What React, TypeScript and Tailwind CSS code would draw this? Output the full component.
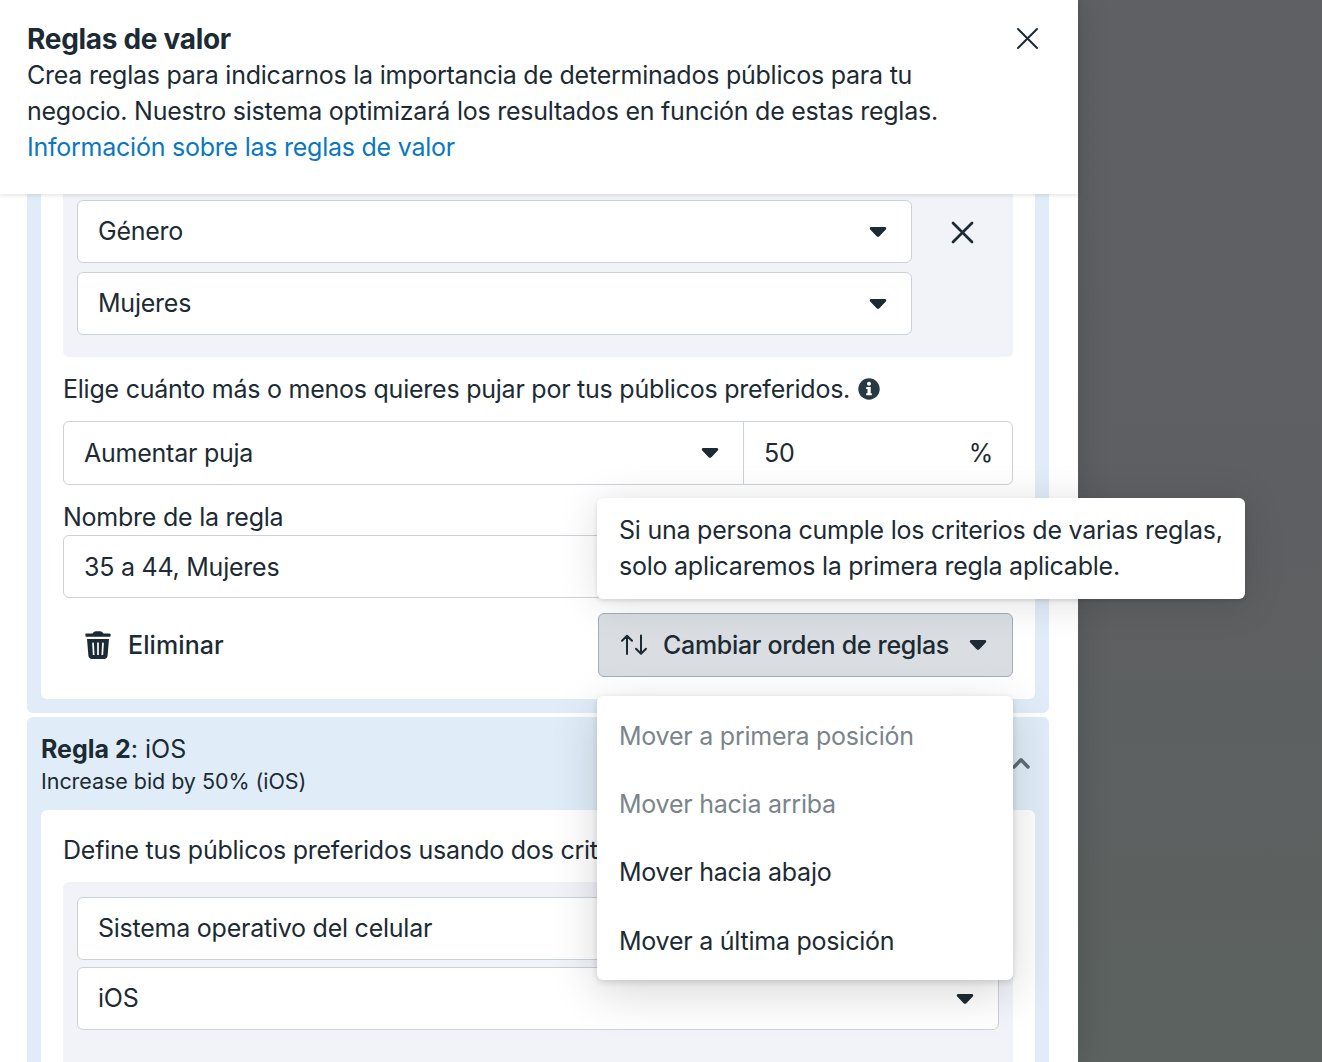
import type { ReactNode } from 'react'

function Caret() {
  return (
    <svg width="18" height="12" viewBox="0 0 18 12" className="shrink-0" aria-hidden>
      <path
        d="M2.2 1h13.6c1.4 0 2 1.5 1 2.5l-6.2 6.4a2.2 2.2 0 0 1-3.2 0L1.200 3.500C.200 2.500.800 1 2.200 1z"
        fill="#1c2b33"
      />
    </svg>
  )
}

function Cross({ weight }: { weight: number }) {
  return (
    <svg width="25" height="25" viewBox="0 0 25 25" fill="none" aria-hidden>
      <path d="M3 3l19 19M22 3L3 22" stroke="#1c2b33" strokeWidth={weight} strokeLinecap="round" />
    </svg>
  )
}

function InfoIcon() {
  return (
    <svg width="22" height="22" viewBox="0 0 22 22" aria-hidden>
      <circle cx="11" cy="11" r="10.700" fill="#283943" />
      <circle cx="11" cy="5.700" r="2" fill="#fff" />
      <path d="M8.200 9h4.500v6.200h1.100v2H8.200v-2h1.300V11H8.200z" fill="#fff" />
    </svg>
  )
}

function TrashIcon() {
  return (
    <svg width="26" height="30" viewBox="0 0 26 30" fill="none" aria-hidden>
      <path
        d="M7.500 3.600C8.700 2 9.500 1.200 11 1.200h4c1.500 0 2.300.8 3.500 2.400h6.100a1 1 0 0 1 1 1v1.200a.9.9 0 0 1-.9.9H1.300a.9.9 0 0 1-.9-.9V4.600a1 1 0 0 1 1-1z"
        fill="#1c2b33"
      />
      <path d="M2 9h22l-1.400 16.600a3.700 3.700 0 0 1-3.700 3.400H7.100a3.700 3.700 0 0 1-3.700-3.400z" fill="#1c2b33" />
      <path d="M8 12.600l.7 12.400M13 12.600V25M18 12.600L17.300 25" stroke="#fff" strokeWidth="1.700" />
    </svg>
  )
}

function SortIcon() {
  return (
    <svg width="28" height="22" viewBox="0 0 28 22" fill="none" aria-hidden>
      <path
        d="M7 20V2M2 6.700L7 1.800l5 4.900M21 1.500v18M16 14.800l5 4.900 5-4.900"
        stroke="#1c2b33"
        strokeWidth="2"
        strokeLinecap="round"
        strokeLinejoin="round"
      />
    </svg>
  )
}

function Select({ label, className }: { label: string; className: string }) {
  return (
    <div
      className={`flex h-[63px] items-center justify-between rounded-md border border-[#cbd2d9] bg-white pr-[24px] pl-5 ${className}`}
    >
      <span>{label}</span>
      <Caret />
    </div>
  )
}

function MenuItem({ disabled, children }: { disabled?: boolean; children: ReactNode }) {
  return (
    <li className={`flex h-[68.300px] items-center px-[21px] ${disabled ? 'text-[#7a858b]' : 'text-[#1c2b33]'}`}>
      {children}
    </li>
  )
}

function ReorderButton() {
  return (
    <div className="relative z-20">
      <button className="flex h-16 w-[415px] items-center rounded-md border border-[#a2aebb] bg-[#dadde2] pr-[25px] pl-[21px] font-medium">
        <SortIcon />
        <span className="ml-[15px] pt-0.5 tracking-[-0.320px]">Cambiar orden de reglas</span>
        <span className="ml-auto flex">
          <Caret />
        </span>
      </button>

      <div className="absolute bottom-[78px] -left-px h-[101px] w-[648px] rounded-md bg-white px-[22px] py-[14px] leading-9 whitespace-nowrap shadow-[0_2px_4px_rgba(0,0,0,0.120),0_4px_40px_rgba(0,0,0,0.130)]">
        <p>Si una persona cumple los criterios de varias reglas,</p>
        <p>solo aplicaremos la primera regla aplicable.</p>
      </div>

      <ul className="absolute top-[83px] -left-px h-[284px] w-[416px] rounded-md bg-white px-px pt-[6.500px] shadow-[0_2px_6px_rgba(0,0,0,0.140),0_12px_48px_rgba(0,0,0,0.160)]">
        <MenuItem disabled>Mover a primera posición</MenuItem>
        <MenuItem disabled>Mover hacia arriba</MenuItem>
        <MenuItem>Mover hacia abajo</MenuItem>
        <MenuItem>Mover a última posición</MenuItem>
      </ul>
    </div>
  )
}

function FirstRule() {
  return (
    <section className="relative z-10 h-[519px] rounded-b-md bg-[#e0edf8] px-[14px] pb-[14px]">
      <div className="h-[505px] rounded-b-md bg-white px-[22px]">
        <div className="flex h-[163px] rounded-b-md bg-[#f1f3f8] pt-[6px] pl-[14px]">
          <div className="flex flex-col gap-[9px]">
            <Select label="Género" className="w-[835px]" />
            <Select label="Mujeres" className="w-[835px]" />
          </div>
          <button className="ml-[38px] flex h-[64px] items-center">
            <Cross weight={2.7} />
          </button>
        </div>

        <div className="flex h-16 items-center gap-2">
          <span className="pt-0.5">Elige cuánto más o menos quieres pujar por tus públicos preferidos.</span>
          <InfoIcon />
        </div>

        <div className="flex h-16 rounded-md border border-[#cbd2d9]">
          <div className="flex w-[680px] items-center justify-between border-r border-[#cbd2d9] pr-[24px] pl-5">
            <span className="pt-0.5">Aumentar puja</span>
            <Caret />
          </div>
          <div className="flex grow items-center justify-between pt-0.5 pr-[19px] pl-5">
            <span>50</span>
            <span>%</span>
          </div>
        </div>

        <label className="mt-[14px] block h-9 leading-9">Nombre de la regla</label>
        <div className="flex h-[63px] items-center rounded-md border border-[#cbd2d9] px-5 pt-0.5">35 a 44, Mujeres</div>

        <div className="mt-[15px] flex items-center justify-between">
          <button className="flex items-center pl-[22px] font-medium">
            <TrashIcon />
            <span className="ml-[17px] pt-0.5 tracking-[0.100px]">Eliminar</span>
          </button>
          <ReorderButton />
        </div>
      </div>
    </section>
  )
}

function SecondRule() {
  return (
    <section className="mt-1 h-[400px] rounded-t-md bg-[#e0edf8] px-[14px]">
      <header className="flex h-[93px] items-center justify-between pr-[4px]">
        <div>
          <h2 className="leading-[34px] tracking-normal">
            <b className="font-bold">Regla 2</b>: iOS
          </h2>
          <p className="text-[21.500px] leading-[30px] tracking-[-0.050px]">Increase bid by 50% (iOS)</p>
        </div>
        <svg width="20" height="14" viewBox="0 0 20 14" fill="none" className="mb-0.5" aria-hidden>
          <path d="M3 11l7-7.200L17 11" stroke="#606d75" strokeWidth="3.500" strokeLinecap="round" strokeLinejoin="round" />
        </svg>
      </header>
      <div className="h-[307px] rounded-t-md bg-white px-[22px] pt-[22px]">
        <p className="h-[50px] leading-9 whitespace-nowrap">Define tus públicos preferidos usando dos criterios.</p>
        <div className="flex h-[235px] flex-col gap-[7px] rounded-t-md bg-[#f1f3f8] px-[14px] pt-[15px]">
          <Select label="Sistema operativo del celular" className="w-[922px]" />
          <Select label="iOS" className="w-[922px]" />
        </div>
      </div>
    </section>
  )
}

export default function App() {
  return (
    <div className="h-[1062px] w-[1322px] overflow-hidden bg-gradient-to-b from-[#5f6064] via-[#5e5f62] to-[#5b625f] font-['Inter',sans-serif] text-[25px] tracking-[-0.240px] text-[#1c2b33]">
      <aside className="h-full w-[1078px] bg-white shadow-[0_0_30px_rgba(0,0,0,0.150)]">
        <header className="relative z-20 flex h-[194px] items-start justify-between bg-white pt-[21px] pr-[38px] pl-[27px] shadow-[0_1px_5px_rgba(0,0,0,0.130)]">
          <div>
            <h1 className="text-[28px] leading-9 font-bold tracking-[-0.300px]">Reglas de valor</h1>
            <p className="leading-9 whitespace-nowrap">
              Crea reglas para indicarnos la importancia de determinados públicos para tu
              <br />
              negocio. Nuestro sistema optimizará los resultados en función de estas reglas.
            </p>
            <a className="leading-9 text-[#0a78be]">Información sobre las reglas de valor</a>
          </div>
          <button className="mt-[5px]">
            <Cross weight={2} />
          </button>
        </header>
        <main className="relative z-10 pr-[29px] pl-[27px]">
          <FirstRule />
          <SecondRule />
        </main>
      </aside>
    </div>
  )
}
